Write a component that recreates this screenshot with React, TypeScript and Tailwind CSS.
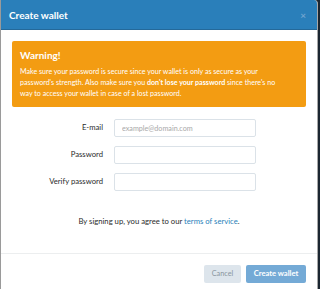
import React from 'react';

export default function App() {
  return (
    <div className="flex h-[289px] w-[320px] overflow-hidden bg-[#1b2631]" style={{ fontFamily: 'Lato, "Open Sans", sans-serif' }}>
      <div className="w-[1px] bg-[#9a9a9a]" />
      <div className="flex w-[317px] flex-col border-r border-[#a8a8a8] bg-white rounded-tr-[4px] overflow-hidden">
        {/* Header */}
        <div className="flex h-[30px] shrink-0 items-center justify-between border-b border-[#24699a] bg-[#2a7fba] pl-[8px] pr-[11px]">
          <h2 className="text-[10px] font-bold leading-[14px] text-white">Create wallet</h2>
          <span className="text-[10px] font-bold leading-none text-[#6fa3cf]">×</span>
        </div>

        {/* Body */}
        <div className="px-[11px] pt-[11px]">
          <div className="rounded-[2px] bg-[#f39c12] pb-[8px] pl-[8px] pr-[4px] pt-[7px] text-white">
            <h3 className="text-[10px] font-bold leading-[14px]">Warning!</h3>
            <p className="mt-[4px] whitespace-nowrap text-[7.1px] leading-[11px]">
              Make sure your password is secure since your wallet is only as secure as your
              <br />
              password's strength. Also make sure you <b>don't lose your password</b> since there's no
              <br />
              way to access your wallet in case of a lost password.
            </p>
          </div>

          <form className="mt-[12px] flex flex-col gap-[9px]">
            {[
              { label: 'E-mail', placeholder: 'example@domain.com', type: 'email' },
              { label: 'Password', placeholder: '', type: 'password' },
              { label: 'Verify password', placeholder: '', type: 'password' },
            ].map((f) => (
              <div key={f.label} className="flex items-center">
                <label className="w-[91px] text-right text-[7.7px] text-[#2b2b2b]">{f.label}</label>
                <input
                  type={f.type}
                  placeholder={f.placeholder}
                  className="ml-[11px] h-[18px] w-[142px] rounded-[2px] border border-[#dbe2e8] px-[7px] text-[7.2px] text-[#333] placeholder:text-[#a8a8a8] outline-none"
                />
              </div>
            ))}
          </form>

          <p className="mt-[24px] text-center text-[7.7px] leading-[12px] text-[#2b2b2b]">
            By signing up, you agree to our <a className="text-[#2a7fba]">terms of service</a>.
          </p>
        </div>

        <div className="mt-[26px] border-t border-[#eceeef]" />
        <div className="flex justify-end gap-[5px] pr-[11px] pt-[11px]">
          <button className="h-[18px] w-[37px] rounded-[2px] bg-[#dde5ec] text-[7.3px] text-[#8a96a0]">Cancel</button>
          <button className="h-[18px] w-[60px] rounded-[2px] bg-[#74aad6] text-[7.6px] font-bold text-white">Create wallet</button>
        </div>
      </div>
    </div>
  );
}
